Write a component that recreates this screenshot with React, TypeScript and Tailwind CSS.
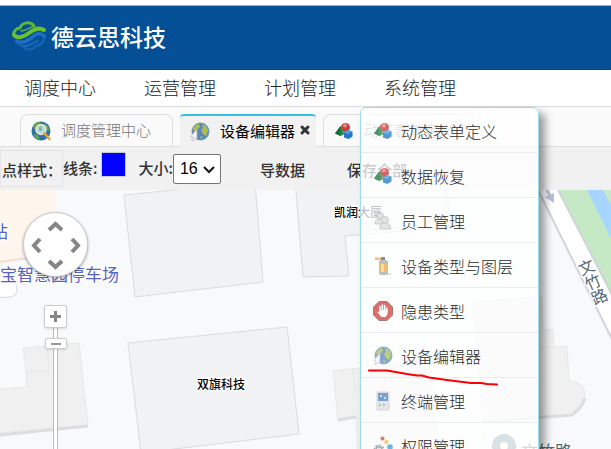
import type { ReactNode } from 'react'
import { X } from 'lucide-react'

function Logo() {
  return (
    <svg viewBox="0 0 34 32" className="h-8 w-[34px]" fill="none" strokeLinecap="round" strokeLinejoin="round" aria-hidden="true">
      <path d="M4 20 C5 24 10 23 12 26 C15 30 21 29 23 25 C29 25 33 20 32 15" stroke="#1763b3" strokeWidth="2.500" />
      <path d="M32 15 C27 10 23 14 18 18 C14 21 9 22 5 20" stroke="#1d6fc2" strokeWidth="3.500" />
      <path d="M11 25 C17 26 20 22 26 20" stroke="#1b69ba" strokeWidth="2" />
      <path d="M22 5 C19 0 10 1 8 7 C4 7 1 11 2 14" stroke="#5fb838" strokeWidth="3" />
      <path d="M2 14 C5 18 12 16 17 12 C22 8 27 6 32 9" stroke="#6cc02e" strokeWidth="4" />
      <path d="M9 10 C13 10 17 7 22 5" stroke="#5fb838" strokeWidth="1.500" />
    </svg>
  )
}

function GlobeSearch() {
  return (
    <svg viewBox="0 0 20 20" className="size-5" aria-hidden="true">
      <circle cx="10" cy="10" r="9.5" fill="#2f6fb0" />
      <path d="M2 5 Q5 0 10 1 L7 5 L4 9 Z M13 2 Q19 5 18 10 L14 8 Z M2 13 L7 14 L9 19 Q4 18 2 13Z" fill="#5fa657" />
      <circle cx="10" cy="8.5" r="5" fill="#b5dde2" stroke="#e8e3c8" strokeWidth="1.6" />
      <path d="M8 6 L11 5 L11 10 L8 10Z" fill="#7fbb9a" />
      <path d="M13.5 12.5 L18.5 18" stroke="#e3a63c" strokeWidth="2.6" strokeLinecap="round" />
    </svg>
  )
}

function GlobeCursor() {
  return (
    <svg viewBox="0 0 20 20" className="size-5" aria-hidden="true">
      <circle cx="10.500" cy="9.500" r="8.5" fill="#5a87bd" stroke="#7393b3" />
      <path d="M3 7 Q5 2 9 2 L10 5 L7 8 L4 9Z M12 2 Q18 4 18 9 L16 14 L13 12 L11 8 L13 6Z M10 14 L13 15 L11 17Z" fill="#a9bf55" />
      <path d="M7 7 L7 18 L5 16 L3 19 L1.500 18 L3 15 L0.500 14.500 Z" fill="#f4f4f4" stroke="#a5a9ad" strokeWidth="0.6" />
    </svg>
  )
}

function Shapes() {
  return (
    <svg viewBox="0 0 20 20" className="size-5" aria-hidden="true">
      <circle cx="11.500" cy="6.500" r="4.500" fill="#cf3a3a" />
      <circle cx="11" cy="4.500" r="2" fill="#e98a84" />
      <path d="M6.500 5 L10.500 13 L6.500 15 L1 12.500 Z" fill="#1f8f45" />
      <path d="M6.500 5 L6.500 15 L1 12.500 Z" fill="#16703a" />
      <path d="M14 9 L18.500 10.500 L18.500 15.500 L14.500 18 L10 16.500 L10 11.500 Z" fill="#2277c4" />
      <path d="M14 9 L18.500 10.500 L14 13 L10 11.500 Z" fill="#4da3e2" />
    </svg>
  )
}

function People() {
  return (
    <svg viewBox="0 0 20 20" className="size-5" fill="#dcdcdc" stroke="#b0b0b0" strokeWidth="0.8" aria-hidden="true">
      <path d="M2 13 Q2 8 7 8 Q11 8 11 13 Z" />
      <circle cx="7" cy="5" r="3.500" />
      <path d="M7 18 Q6 12 12 12 Q18 12 17.500 18 Z" />
      <circle cx="12" cy="9" r="3.500" />
    </svg>
  )
}

function Extinguisher() {
  return (
    <svg viewBox="0 0 20 20" className="size-5" aria-hidden="true">
      <path d="M2 1 L8 2 L9 4 L2 4Z" fill="#f3b04c" />
      <rect x="8" y="1" width="4" height="4" fill="#666b6e" />
      <rect x="6" y="4" width="9" height="15" rx="2" fill="#a4aaad" />
      <rect x="6" y="8" width="9" height="8" fill="#eaa940" />
      <rect x="8" y="8" width="3" height="8" fill="#f7d18a" />
      <path d="M15 18 L18 18" stroke="#aaa" />
    </svg>
  )
}

function StopHand() {
  return (
    <svg viewBox="0 0 20 20" className="size-5" aria-hidden="true">
      <path d="M6 0.500 H14 L19.500 6 V14 L14 19.500 H6 L0.500 14 V6 Z" fill="#cf4038" stroke="#8d4a45" />
      <path d="M7 11 V5.500 M9.300 10 V4 M11.600 10 V4.500 M13.700 11 V7" stroke="#fff" strokeWidth="1.600" strokeLinecap="round" />
      <path d="M6.200 9 H14.500 V13 L12.500 16 H8.500 L4.500 11.500 L5 10.500 L6.500 11.500Z" fill="#fff" />
    </svg>
  )
}

function Terminal() {
  return (
    <svg viewBox="0 0 20 20" className="size-5" aria-hidden="true">
      <rect x="4" y="1" width="12" height="18" rx="1" fill="#dfe1e3" stroke="#c3c6c9" />
      <rect x="5" y="2" width="10" height="8" fill="#5182bd" />
      <path d="M7 4 h2 v2 h-2z M11 6 h2 v2 h-2z" fill="#b9d0ea" />
      <path d="M6 12 l3 2 l-3 2z M10 12 l3 2 l-3 2z" fill="#abb0b5" />
    </svg>
  )
}

function Permission() {
  return (
    <svg viewBox="0 0 20 20" className="size-5" aria-hidden="true">
      <circle cx="9.500" cy="2.500" r="2" fill="#e04a42" />
      <circle cx="13.500" cy="6" r="2.200" fill="#f1c63e" />
      <circle cx="17" cy="11" r="2.800" fill="#3e9be0" />
      <circle cx="6" cy="14" r="4" fill="#ddd" stroke="#8c8f92" strokeWidth="3" strokeDasharray="2 1" />
      <circle cx="6" cy="14" r="3" fill="#ddd" stroke="#8c8f92" />
    </svg>
  )
}

const menuItems: { label: string; icon: ReactNode }[] = [
  { label: '动态表单定义', icon: <Shapes /> },
  { label: '数据恢复', icon: <Shapes /> },
  { label: '员工管理', icon: <People /> },
  { label: '设备类型与图层', icon: <Extinguisher /> },
  { label: '隐患类型', icon: <StopHand /> },
  { label: '设备编辑器', icon: <GlobeCursor /> },
  { label: '终端管理', icon: <Terminal /> },
  { label: '权限管理', icon: <Permission /> },
]

function SystemMenu() {
  return (
    <div className="absolute left-0 top-full z-20 mt-px w-[179px] rounded-md border border-[#9bdcec] bg-white/75 shadow-[6px_6px_9px_rgba(0,0,0,0.4)]">
      <ul>
        {menuItems.map((item) => (
          <li key={item.label} className="h-[45px] border-b border-[#e9edee]">
            <a href="#" className="flex h-full items-center gap-2 pl-3 pt-px text-base font-light text-[#2b2b2b]">
              <span className="opacity-75">{item.icon}</span>
              {item.label}
            </a>
          </li>
        ))}
      </ul>
      <svg viewBox="0 0 132 18" className="absolute left-[6px] top-[261px] h-[18px] w-[132px]" fill="none" aria-hidden="true">
        <path d="M2 1.500 H20 L40 5 L50 6.500 H55 L62 8.500 L80 11 L104 14 H114 L120 15 L130 15.500" stroke="#fb0007" strokeWidth="2.200" strokeLinecap="round" strokeLinejoin="round" />
      </svg>
    </div>
  )
}

function Nav() {
  return (
    <nav className="relative z-10 border-b border-[#dcdcdc] bg-white shadow-[0_-1px_2px_rgba(0,0,0,0.1)]">
      <ul className="flex h-9">
        {['调度中心', '运营管理', '计划管理', '系统管理'].map((label) => (
          <li key={label} className="relative w-[120px]">
            <a href="#" className="flex h-full items-center justify-center pb-[3px] text-lg font-light text-[#222]">
              {label}
            </a>
            {label === '系统管理' && <SystemMenu />}
          </li>
        ))}
      </ul>
    </nav>
  )
}

function Tabs() {
  const idle = 'flex h-8 items-center gap-[10px] rounded-t-lg border border-b-0 border-[#dedede] px-[10px] text-[#777]'
  return (
    <div role="tablist" className="flex items-end gap-[7px] border-b border-[#dedede] bg-[#fafafa] pl-5 pt-[7px] text-[15px] font-light">
      <button role="tab" aria-selected="false" className={`${idle} w-[153px]`}>
        <GlobeSearch />
        调度管理中心
      </button>
      <div className="relative -mb-px flex h-[33px] w-[136px] items-center rounded-t border-t-2 border-[#35bfe8] bg-[#f1f1f1] pl-[10px]">
        <button role="tab" aria-selected="true" className="flex items-center gap-[10px] font-normal text-black">
          <GlobeCursor />
          设备编辑器
        </button>
        <button aria-label="关闭" className="mb-1 ml-1 text-[#333]">
          <X size={12} strokeWidth={6} />
        </button>
      </div>
      <button role="tab" aria-selected="false" className={`${idle} w-[152px]`}>
        <Shapes />
        动态表单定义
      </button>
    </div>
  )
}

function Toolbar() {
  return (
    <div className="flex h-[43px] items-center bg-[#f1f1f1] text-[15px] font-medium text-[#333]">
      <div className="flex h-[37px] w-[63px] items-center border border-[#e4e4e4] pl-px pt-1 whitespace-nowrap">点样式：</div>
      <label htmlFor="line-color">线条:</label>
      <input
        id="line-color"
        type="color"
        defaultValue="#0000ff"
        className="mb-2 ml-1 size-[25px] appearance-none border border-[#ccc] bg-[#0000ff] p-0 [&::-webkit-color-swatch]:border-0 [&::-webkit-color-swatch-wrapper]:p-0"
      />
      <label htmlFor="size" className="ml-3">大小:</label>
      <div className="relative">
        <select
          id="size"
          defaultValue="16"
          className="h-[30px] w-12 appearance-none rounded-xs border border-[#767676] bg-white pl-[6px] font-['Liberation_Sans',sans-serif] text-base font-normal text-black"
        >
          <option>12</option>
          <option>14</option>
          <option>16</option>
          <option>18</option>
        </select>
        <svg viewBox="0 0 12 8" className="pointer-events-none absolute right-[6px] top-3 h-2 w-3" fill="none" aria-hidden="true">
          <path d="M1 1 L6 6 L11 1" stroke="#111" strokeWidth="2" />
        </svg>
      </div>
      <div className="ml-[39px] flex gap-[42px] pt-1">
        <button>导数据</button>
        <button>保存全部</button>
      </div>
    </div>
  )
}

function MapDrawing() {
  const halo = { stroke: '#fff', strokeWidth: 3, paintOrder: 'stroke' as const, strokeLinejoin: 'round' as const }
  return (
    <svg className="absolute inset-0 size-full" role="img" aria-label="地图">
      <g transform="translate(0 -190)">
        <path d="M0 180 H55 L57 254 L0 262Z" fill="#fef5ed" />
        <path d="M0 262 L57 254" stroke="#f1dfd0" strokeWidth="2" />
        <path d="M-5 282 L9 281 Q17 281 17 289 Q17 297 9 297 L-5 298Z" fill="#fff" stroke="#d9dadd" />
        <g fill="#f0f2f4" stroke="#d9dbde">
          <path d="M124 195 L255 182 L263 282 L135 297Z" />
          <path d="M295 180 L303 277 L349 276 L345 236 L450 227 L446 180Z" />
          <path d="M128 343 L287 327 L299 434 L141 453Z" />
        </g>
        <g fill="#f0f0f0" stroke="#e7e8e9">
          <path d="M23 348 L79 343 L88 425 L-2 433 V389 L27 387 L26 372Z" />
          <path d="M26 372 L49 370 L47 346" fill="none" />
          <path d="M333 371 L429 360 L440 460 L358 460 L356 416 L338 420Z" />
          <path d="M353 368 L355 392 L429 382" fill="none" />
          <path d="M473 302 L542 296 L543 330 L553 329 L554 347 L567 346 L569 381 Q586 382 585 396 L572 414 L483 422Z" />
          <path d="M533 349 L554 347" fill="none" />
        </g>
        <g fill="none" stroke="#dcdde0" strokeWidth="3">
          <path d="M0 435 L88 426" />
          <path d="M338 420 L356 417" />
          <path d="M483 422 L572 415 Q582 408 585 398" />
        </g>
        <path d="M558 190 H900 V850 L611 296Z" fill="#c5e8c5" />
        <path d="M587 190 H603 L900 760 V820Z" fill="#a6d6ff" />
        <path d="M538 190 H558 L900 872 V920Z" fill="#fff" />
        <path d="M538 190 L900 920 M558 190 L900 850" fill="none" stroke="#d3d3da" strokeWidth="2" />
        <path d="M547 190 L550 196" stroke="#b8bfd8" strokeWidth="3" />
        <path d="M545 197 L554 193 L554 203Z" fill="#b8bfd8" />
        <text
          transform="translate(583 260) rotate(-24)"
          fontSize="16"
          fill="#566873"
          className="[writing-mode:vertical-rl]"
          {...halo}
        >
          文竹路
        </text>
        <circle cx="504" cy="446" r="8" fill="#fff" stroke="#698795" strokeWidth="8" />
        <text x="521" y="458" fontSize="17" fill="#4e6672" {...halo}>文竹路</text>
        <g fontSize="17" fill="#5763bd" {...halo}>
          <text x="-9" y="238">站</text>
          <text x="0" y="281">宝智慧园停车场</text>
        </g>
        <g fontSize="12" fontWeight="500" fill="#000" {...halo}>
          <text x="334" y="217">凯润大厦</text>
          <text x="197" y="389">双旗科技</text>
        </g>
      </g>
    </svg>
  )
}

function MapControls() {
  return (
    <div className="absolute left-[23px] top-[22px] flex h-full w-[65px] flex-col items-center">
      <button aria-label="平移" className="size-[65px] shrink-0 rounded-full border border-[#ccc] bg-white shadow-[0_1px_3px_rgba(0,0,0,0.35)]">
        <svg viewBox="0 0 63 63" className="size-full" fill="none" stroke="#868686" strokeWidth="4" aria-hidden="true">
          <path d="M25 17 L31.500 11 L38 17 M25 48 L31.500 54 L38 48 M16 26 L10 32.500 L16 39 M48 26 L54 32.500 L48 39" />
        </svg>
      </button>
      <button aria-label="放大" className="z-10 mt-7 flex size-[23px] shrink-0 items-center justify-center rounded-xs border border-[#ccc] bg-white shadow">
        <svg viewBox="0 0 11 11" className="size-[11px]" stroke="#858585" strokeWidth="3" aria-hidden="true">
          <path d="M0 5.500 H11 M5.500 0 V11" />
        </svg>
      </button>
      <div className="relative flex w-[23px] grow justify-center">
        <div className="h-full w-[5px] border-x border-[#bbb] bg-white" />
        <button aria-label="缩放级别" className="absolute top-[10px] flex h-[11px] w-[22px] items-center justify-center rounded-xs border border-[#ccc] bg-white shadow">
          <span className="h-[2px] w-[10px] bg-[#999]" />
        </button>
      </div>
    </div>
  )
}

export default function App() {
  return (
    <div className="flex h-screen flex-col overflow-hidden bg-white pt-[5px] font-['Noto_Sans_CJK_SC','Noto_Sans',sans-serif]">
      <header className="flex h-[65px] items-center gap-[5px] border-t border-[#8fb4d0] bg-[#044f95] pb-[3px] pl-3">
        <Logo />
        <h1 className="text-[23px] font-medium text-white">德云思科技</h1>
      </header>
      <Nav />
      <Tabs />
      <Toolbar />
      <main className="relative grow overflow-hidden bg-[#f7f9fb]">
        <MapDrawing />
        <MapControls />
      </main>
    </div>
  )
}
